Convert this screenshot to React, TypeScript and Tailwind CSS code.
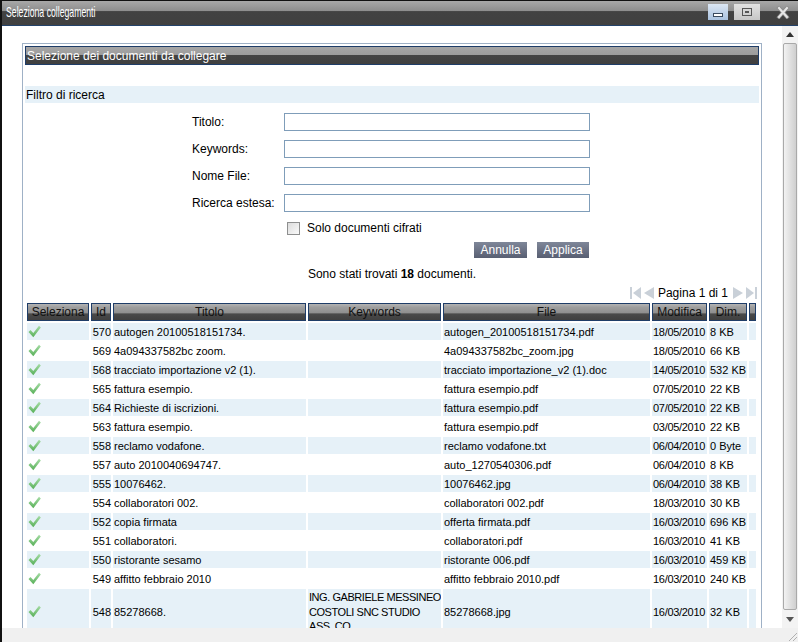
import React from "react";

const rows = [
  ["570", "autogen 20100518151734.", "", "autogen_20100518151734.pdf", "18/05/2010", "8 KB"],
  ["569", "4a094337582bc zoom.", "", "4a094337582bc_zoom.jpg", "18/05/2010", "66 KB"],
  ["568", "tracciato importazione v2 (1).", "", "tracciato importazione_v2 (1).doc", "14/05/2010", "532 KB"],
  ["565", "fattura esempio.", "", "fattura esempio.pdf", "07/05/2010", "22 KB"],
  ["564", "Richieste di iscrizioni.", "", "fattura esempio.pdf", "07/05/2010", "22 KB"],
  ["563", "fattura esempio.", "", "fattura esempio.pdf", "03/05/2010", "22 KB"],
  ["558", "reclamo vodafone.", "", "reclamo vodafone.txt", "06/04/2010", "0 Byte"],
  ["557", "auto 2010040694747.", "", "auto_1270540306.pdf", "06/04/2010", "8 KB"],
  ["555", "10076462.", "", "10076462.jpg", "06/04/2010", "38 KB"],
  ["554", "collaboratori 002.", "", "collaboratori 002.pdf", "18/03/2010", "30 KB"],
  ["552", "copia firmata", "", "offerta firmata.pdf", "16/03/2010", "696 KB"],
  ["551", "collaboratori.", "", "collaboratori.pdf", "16/03/2010", "41 KB"],
  ["550", "ristorante sesamo", "", "ristorante 006.pdf", "16/03/2010", "459 KB"],
  ["549", "affitto febbraio 2010", "", "affitto febbraio 2010.pdf", "16/03/2010", "240 KB"],
  ["548", "85278668.", "ING. GABRIELE MESSINEO|COSTOLI SNC STUDIO|ASS. CO.", "85278668.jpg", "16/03/2010", "32 KB"],
];

const fields = ["Titolo:", "Keywords:", "Nome File:", "Ricerca estesa:"];
const headers = ["Seleziona", "Id", "Titolo", "Keywords", "File", "Modifica", "Dim.", ""];

function Check() {
  return (
    <svg width="13" height="13" viewBox="0 0 13 13" className="block">
      <defs>
        <linearGradient id="chk" x1="0" y1="0" x2="0" y2="1">
          <stop offset="0" stopColor="#a6dca6" />
          <stop offset="1" stopColor="#58b058" />
        </linearGradient>
      </defs>
      <polygon points="0.5,7 2.5,5 5.3,8 11,0.8 12.8,2.6 5.3,12.2" fill="url(#chk)" />
    </svg>
  );
}

function PageIcon({ dir, end }: { dir: "l" | "r"; end?: boolean }) {
  return (
    <svg width="13" height="14" viewBox="0 0 13 14" className="block">
      {dir === "l" ? (
        <>
          {end && <rect x="1" y="1" width="2" height="12" fill="#c9d0d8" />}
          <polygon points={end ? "12,1 4,7 12,13" : "12,1 2,7 12,13"} fill="#c9d0d8" />
        </>
      ) : (
        <>
          <polygon points={end ? "1,1 9,7 1,13" : "1,1 11,7 1,13"} fill="#c9d0d8" />
          {end && <rect x="10" y="1" width="2" height="12" fill="#c9d0d8" />}
        </>
      )}
    </svg>
  );
}

export default function App() {
  return (
    <div className="flex h-[642px] w-[798px] flex-col overflow-hidden border-l-2 border-[#111] bg-white font-['Liberation_Sans',Arial,sans-serif] text-[12px] text-black">
      {/* title bar */}
      <div className="relative flex h-[26px] shrink-0 items-center border-t border-b border-t-[#111] border-b-[#23426a] bg-[linear-gradient(to_bottom,#a8a8a8_0%,#8e8e8e_40%,#424242_44%,#404040_100%)] pl-[4px]">
        <span className="inline-block origin-left scale-x-[0.6] whitespace-nowrap text-[14.5px] text-white">
          Seleziona collegamenti
        </span>
        <div className="absolute right-[8px] top-[3px] flex items-center gap-[6px]">
          <div className="flex h-[16px] w-[20px] items-end justify-center bg-[linear-gradient(to_bottom,#dbe6f3,#aac2df)] pb-[3px]">
            <div className="h-[4px] w-[10px] border border-[#3a4a5e] bg-white" />
          </div>
          <div className="flex h-[16px] w-[26px] items-center justify-center bg-[linear-gradient(to_bottom,#e2e2e2,#c6c6c6)]">
            <div className="flex h-[8px] w-[10px] items-center justify-center border border-[#555]">
              <div className="h-[2px] w-[4px] bg-[#555]" />
            </div>
          </div>
          <svg width="14" height="13" viewBox="0 0 14 13" className="ml-[10px] block">
            <path d="M3 2 L11 11 M11 2 L3 11" stroke="#8a8a8a" strokeWidth="3.6" strokeLinecap="square" />
            <path d="M3 2 L11 11 M11 2 L3 11" stroke="#e6e6e6" strokeWidth="2" strokeLinecap="square" />
          </svg>
        </div>
      </div>

      {/* body */}
      <div className="flex h-[602px] shrink-0">
        <div className="flex-1 overflow-hidden pl-[20px] pt-[17px]">
          <div className="w-[740px] border border-[#9fb1c6] px-[2px] pt-[2px]">
            <div className="flex h-[19px] items-center border border-[#1f3d68] bg-[linear-gradient(to_bottom,#a6a6a6_0%,#9c9c9c_47%,#444_50%,#404040_100%)] pl-[1px] text-[12px] text-white">
              Selezione dei documenti da collegare
            </div>

            <div className="mt-[21px] flex h-[17px] items-center bg-[#e6f1f8] pl-[1px]">Filtro di ricerca</div>

            <div className="ml-[167px] mt-[5px] w-[398px]">
              {fields.map((f) => (
                <div key={f} className="grid h-[27px] grid-cols-[92px_306px] items-center">
                  <span>{f}</span>
                  <div className="h-[18px] border border-[#7f9db9] bg-white" />
                </div>
              ))}
              <div className="grid h-[24px] grid-cols-[92px_306px] items-center">
                <span />
                <div className="flex items-center gap-[7px] pl-[3px]">
                  <div className="h-[13px] w-[13px] border border-[#8e8f8f] bg-[linear-gradient(135deg,#dcdcdc,#fafafa)]" />
                  <span>Solo documenti cifrati</span>
                </div>
              </div>
              <div className="mt-[2px] flex justify-end gap-[10px] pr-[1px]">
                <button className="h-[16px] w-[53px] bg-[linear-gradient(to_bottom,#7f8799,#585f72)] text-center text-[12px] leading-[16px] text-white">
                  Annulla
                </button>
                <button className="h-[16px] w-[52px] bg-[linear-gradient(to_bottom,#7f8799,#585f72)] text-center text-[12px] leading-[16px] text-white">
                  Applica
                </button>
              </div>
            </div>

            <div className="mt-[8px] flex h-[16px] items-center justify-center">
              <span>
                Sono stati trovati <b>18</b> documenti.
              </span>
            </div>

            <div className="mt-[3px] flex h-[16px] items-center justify-end pr-[1px]">
              <PageIcon dir="l" end />
              <PageIcon dir="l" />
              <span className="ml-[3px] mr-[4px]">Pagina 1 di 1</span>
              <PageIcon dir="r" />
              <PageIcon dir="r" end />
            </div>

            <table className="w-[733px] table-fixed border-separate border-spacing-[2px] text-[11px]">
              <colgroup>
                <col className="w-[62px]" />
                <col className="w-[20px]" />
                <col className="w-[193px]" />
                <col className="w-[133px]" />
                <col className="w-[207px]" />
                <col className="w-[55px]" />
                <col className="w-[38px]" />
                <col className="w-[7px]" />
              </colgroup>
              <thead>
                <tr>
                  {headers.map((h, i) => (
                    <th
                      key={i}
                      className="h-[18px] overflow-hidden whitespace-nowrap border border-[#1f3d68] bg-[linear-gradient(to_bottom,#b4b4b4_0%,#9e9e9e_20%,#8f8f8f_55%,#4a4a4a_62%,#404040_100%)] p-0 text-center text-[12px] leading-[15px] font-normal text-[#111]"
                    >
                      {h}
                    </th>
                  ))}
                </tr>
              </thead>
              <tbody>
                {rows.map((r, i) => {
                  const bg = i % 2 === 0 ? "bg-[#e6f1f8]" : "bg-white";
                  return (
                    <tr key={r[0]}>
                      <td className={`h-[17px] p-0 pl-[1px] ${bg}`}>
                        <Check />
                      </td>
                      <td className={`h-[17px] p-0 text-right leading-[14px] ${bg}`}>{r[0]}</td>
                      <td className={`overflow-hidden whitespace-nowrap p-0 pl-[1px] leading-[14px] ${bg}`}>{r[1]}</td>
                      <td className={`overflow-hidden whitespace-nowrap p-0 py-[1px] pl-[1px] leading-[14.5px] tracking-[-0.45px] ${bg}`}>
                        {r[2]
                          ? r[2].split("|").map((l) => (
                              <div key={l}>{l}</div>
                            ))
                          : null}
                      </td>
                      <td className={`overflow-hidden whitespace-nowrap p-0 pl-[1px] leading-[14px] ${bg}`}>{r[3]}</td>
                      <td className={`overflow-hidden whitespace-nowrap p-0 pl-[1px] leading-[14px] tracking-[-0.3px] ${bg}`}>{r[4]}</td>
                      <td className={`overflow-hidden whitespace-nowrap p-0 pl-[1px] leading-[14px] ${bg}`}>{r[5]}</td>
                      <td className={`p-0 ${bg}`} />
                    </tr>
                  );
                })}
              </tbody>
            </table>
          </div>
        </div>

        {/* scrollbar */}
        <div className="flex w-[16px] flex-col bg-[#f3f3f3]">
          <div className="flex h-[17px] items-center justify-center">
            <svg width="8" height="5" viewBox="0 0 8 5" className="block">
              <polygon points="0,5 4,0 8,5" fill="#333" />
            </svg>
          </div>
          <div className="mx-px mb-[18px] flex-1 rounded-[2px] border border-[#a9a9a9] bg-[linear-gradient(to_right,#f2f2f2_0%,#e2e2e2_45%,#cfcfcf_100%)]" />
          <div className="-mt-[17px] flex h-[17px] items-center justify-center">
            <svg width="8" height="5" viewBox="0 0 8 5" className="block">
              <polygon points="0,0 8,0 4,5" fill="#555" />
            </svg>
          </div>
        </div>
      </div>

      {/* status bar */}
      <div className="relative h-[14px] flex-1 bg-[#f0f0f0]">
        <svg width="12" height="12" viewBox="0 0 12 12" className="absolute bottom-0 right-0 block">
          <path d="M11 3 L3 11 M11 7 L7 11" stroke="#b0b0b0" strokeWidth="1" />
        </svg>
      </div>
    </div>
  );
}
